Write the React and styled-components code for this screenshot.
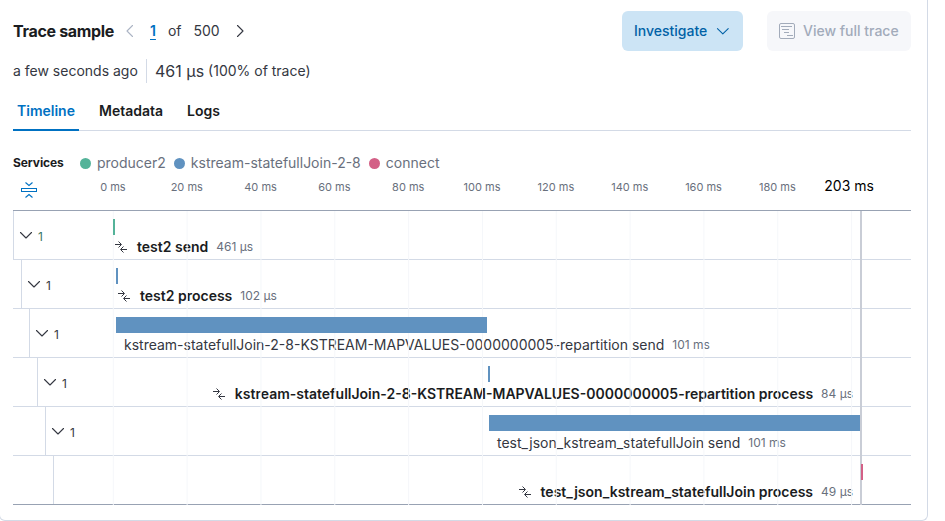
import React from 'react';
import styled, { createGlobalStyle } from 'styled-components';

const GlobalStyle = createGlobalStyle`
  *, *::before, *::after { box-sizing: border-box; }
  body {
    margin: 0;
    background: #fff;
    color: #343741;
    font-family: Inter, 'Liberation Sans', sans-serif;
    font-size: 14px;
    line-height: 20px;
    overflow: hidden;
  }
`;

const Panel = styled.main`
  width: 929px;
  height: 522px;
  margin: -1px 0 0 -1px;
  padding: 12px 16px 0 13px;
  border: 1px solid #d3dae6;
  border-top: 0;
  border-radius: 0 0 6px 6px;
`;

const Header = styled.header`
  display: flex;
  align-items: center;
  height: 40px;
`;

const Title = styled.h2`
  margin: 0;
  width: 105px;
  font-size: 16px;
  line-height: 24px;
  font-weight: 700;
  letter-spacing: -0.32px;
  color: #1a1c21;
  white-space: nowrap;
`;

const Pagination = styled.nav`
  display: flex;
  align-items: center;
  flex: 1;
  padding-left: 4px;
`;

const PageArrow = styled.button`
  display: flex;
  padding: 0;
  border: 0;
  background: none;
  color: ${(p) => (p.disabled ? '#abb4c4' : '#343741')};
`;

const Page = styled.span`
  margin-left: ${(p) => p.$gap}px;
  color: ${(p) => (p.$current ? '#0071c2' : '#343741')};
  font-weight: ${(p) => (p.$current ? 600 : 400)};
  text-decoration: ${(p) => (p.$current ? 'underline' : 'none')};
  text-underline-offset: 3px;
  & + button { margin-left: 12px; }
`;

const Actions = styled.div`
  display: flex;
  gap: 24px;
`;

const Button = styled.button`
  display: flex;
  align-items: center;
  height: 40px;
  width: ${(p) => p.$width}px;
  padding: 0 12px;
  gap: 8px;
  border: 0;
  border-radius: 6px;
  font: 500 14px/20px Inter, sans-serif;
  white-space: nowrap;
  background: ${(p) => (p.disabled ? '#f6f7fa' : '#cce4f5')};
  color: ${(p) => (p.disabled ? '#a2abba' : '#0061a6')};
`;

const Summary = styled.div`
  display: flex;
  align-items: center;
  height: 24px;
  margin-top: 8px;
`;

const Age = styled.span`
  width: 134px;
  height: 24px;
  line-height: 24px;
  border-right: 1px solid #d3dae6;
`;

const Duration = styled.span`
  margin: 0 4px 0 8px;
  font-size: 16px;
`;

const Tabs = styled.div`
  display: flex;
  height: 40px;
  gap: 16px;
  margin-top: 8px;
  border-bottom: 1px solid #d3dae6;
`;

const Tab = styled.button`
  height: 40px;
  padding: 0 4px;
  border: 0;
  background: none;
  font: 600 14px/40px Inter, sans-serif;
  color: ${(p) => (p.$active ? '#0071c2' : '#1a1c21')};
  box-shadow: ${(p) => (p.$active ? 'inset 0 -2px 0 #0071c2' : 'none')};
`;

const Legend = styled.div`
  display: flex;
  align-items: center;
  height: 20px;
  margin-top: 22px;
  color: #69707d;
`;

const LegendTitle = styled.span`
  width: 67px;
  font-size: 12px;
  font-weight: 700;
  letter-spacing: -0.1px;
  color: #1a1c21;
`;

const LegendItem = styled.span`
  display: flex;
  align-items: center;
  gap: 6px;
  margin-right: 8px;
  &::before {
    content: '';
    width: 11px;
    height: 11px;
    border-radius: 50%;
    background: ${(p) => p.$color};
  }
`;

const Axis = styled.div`
  display: flex;
  height: 37px;
`;

const Collapse = styled.button`
  display: flex;
  width: 63px;
  padding: 9px 0 0 8px;
  border: 0;
  background: none;
  color: #0071c2;
`;

const Tick = styled.span`
  width: 73.83px;
  padding-top: 4px;
  text-align: center;
  font-size: 11px;
  line-height: 20px;
  color: #69707d;
  white-space: nowrap;
`;

const TotalTick = styled.span`
  margin-left: 10px;
  padding-top: 3px;
  line-height: 20px;
  color: #000;
  white-space: nowrap;
`;

const Waterfall = styled.section`
  position: relative;
  border-top: 1px solid #98a2b3;
`;

const GridLines = styled.svg`
  position: absolute;
  top: 0;
  left: 0;
  width: 898px;
  height: 294px;
  pointer-events: none;
`;

const Row = styled.div`
  display: flex;
  height: 49px;
  border-bottom: 1px solid ${(p) => (p.$last ? '#98a2b3' : '#d3dae6')};
`;

const Toggle = styled.div`
  display: flex;
  align-items: center;
  gap: 4px;
  width: ${(p) => 100 - p.$depth * 8}px;
  margin-left: ${(p) => p.$depth * 8}px;
  padding-left: 4px;
  border-left: 1px solid #d3dae6;
  font-size: 12px;
  color: ${(p) => (p.$depth ? '#343741' : '#387765')};
  svg { color: #343741; margin-top: -1px; }
  span { margin-top: 4px; }
`;

const Track = styled.div`
  width: 748px;
  padding-top: 8px;
`;

const Bar = styled.div`
  height: 16px;
`;

const SpanLabel = styled.div`
  display: flex;
  align-items: center;
  height: 20px;
  margin-top: 2px;
  justify-content: ${(p) => (p.$right ? 'flex-end' : 'flex-start')};
  padding-right: 8px;
  white-space: nowrap;
`;

const SpanName = styled.span`
  font-weight: ${(p) => (p.$bold ? 600 : 400)};
  color: ${(p) => (p.$bold ? '#1a1c21' : '#343741')};
  margin-left: ${(p) => (p.$bold ? 8 : 0)}px;
`;

const SpanTime = styled.span`
  margin-left: 8px;
  font-size: 12px;
  color: #69707d;
`;

const Chevron = ({ dir = 'down', size = 16 }) => {
  const d = { down: 'M2.5 5.5 8 11l5.5-5.5', left: 'M10.5 2.5 5 8l5.5 5.5', right: 'M5.5 2.5 11 8l-5.5 5.5' }[dir];
  return (
    <svg width={size} height={size} viewBox="0 0 16 16" fill="none" stroke="currentColor" strokeWidth="1.1" strokeLinecap="round" strokeLinejoin="round">
      <path d={d} />
    </svg>
  );
};

const TraceIcon = () => (
  <svg width="16" height="16" viewBox="0 0 16 16" fill="none" stroke="currentColor">
    <rect x=".5" y=".5" width="15" height="15" rx="1.5" />
    <path d="M2 3.5h11M3 6.5h7M5 9.5h5M8 12.5h6" />
  </svg>
);

const FoldIcon = () => (
  <svg width="16" height="16" viewBox="0 0 16 16" fill="none" stroke="currentColor">
    <rect x=".5" y="6.5" width="15" height="3" />
    <path d="M4.5.5 8 3.5 11.5.5M4.5 15.5 8 12.5l3.5 3" strokeWidth="1.1" />
  </svg>
);

const MergeIcon = () => (
  <svg width="16" height="16" viewBox="0 0 16 16" fill="none" stroke="#343741" strokeWidth="1">
    <path d="M2 5.5h6M5.5 2.5l3 3-3 3M14 10.5H8M10.5 7.5l-3 3 3 3" />
  </svg>
);

const GREEN = '#54b399';
const BLUE = '#6092c0';
const PINK = '#d36086';

const services = [
  ['producer2', GREEN],
  ['kstream-statefullJoin-2-8', BLUE],
  ['connect', PINK],
];

const spans = [
  { name: 'test2 send', time: '461 µs', start: 0, width: 2, color: GREEN, bold: true, pad: 0 },
  { name: 'test2 process', time: '102 µs', start: 3, width: 2, color: BLUE, bold: true, pad: 0 },
  { name: 'kstream-statefullJoin-2-8-KSTREAM-MAPVALUES-0000000005-repartition send', time: '101 ms', start: 3, width: 371, color: BLUE, pad: 8 },
  { name: 'kstream-statefullJoin-2-8-KSTREAM-MAPVALUES-0000000005-repartition process', time: '84 µs', start: 375, width: 2, color: BLUE, bold: true, right: true },
  { name: 'test_json_kstream_statefullJoin send', time: '101 ms', start: 376, width: 371, color: BLUE, pad: 8 },
  { name: 'test_json_kstream_statefullJoin process', time: '49 µs', start: 748, width: 2, color: PINK, bold: true, right: true },
];

const ticks = [0, 20, 40, 60, 80, 100, 120, 140, 160, 180];

export default function App() {
  return (
    <>
      <GlobalStyle />
      <Panel>
        <Header>
          <Title>Trace sample</Title>
          <Pagination>
            <PageArrow disabled><Chevron dir="left" /></PageArrow>
            <Page $gap={12} $current>1</Page>
            <Page $gap={12}>of</Page>
            <Page $gap={12}>500</Page>
            <PageArrow><Chevron dir="right" /></PageArrow>
          </Pagination>
          <Actions>
            <Button $width={121}>Investigate<Chevron /></Button>
            <Button $width={144} disabled><TraceIcon />View full trace</Button>
          </Actions>
        </Header>
        <Summary>
          <Age>a few seconds ago</Age>
          <Duration>461 µs</Duration>
          <span>(100% of trace)</span>
        </Summary>
        <Tabs>
          <Tab $active>Timeline</Tab>
          <Tab>Metadata</Tab>
          <Tab>Logs</Tab>
        </Tabs>
        <Legend>
          <LegendTitle>Services</LegendTitle>
          {services.map(([name, color]) => (
            <LegendItem key={name} $color={color}>{name}</LegendItem>
          ))}
        </Legend>
        <Axis>
          <Collapse><FoldIcon /></Collapse>
          {ticks.map((t) => <Tick key={t}>{t} ms</Tick>)}
          <TotalTick>203 ms</TotalTick>
        </Axis>
        <Waterfall>
          <GridLines>
            {[...ticks, 200].map((t) => (
              <line key={t} x1={100.3 + t * 3.6915} x2={100.3 + t * 3.6915} y1="0" y2="294" stroke="#f5f7fa" />
            ))}
            <line x1="848" x2="848" y1="0" y2="294" stroke="#c9cdd6" strokeWidth="2" />
          </GridLines>
          {spans.map((s, i) => (
            <Row key={s.name} $last={i === spans.length - 1}>
              <Toggle $depth={i}>
                {i < spans.length - 1 && <><Chevron /><span>1</span></>}
              </Toggle>
              <Track>
                <Bar style={{ marginLeft: s.start, width: s.width, background: s.color, position: 'relative' }} />
                <SpanLabel $right={s.right} style={{ marginLeft: s.right ? 0 : s.start + s.pad }}>
                  {s.bold && <MergeIcon />}
                  <SpanName $bold={s.bold}>{s.name}</SpanName>
                  <SpanTime>{s.time}</SpanTime>
                </SpanLabel>
              </Track>
            </Row>
          ))}
        </Waterfall>
      </Panel>
    </>
  );
}
